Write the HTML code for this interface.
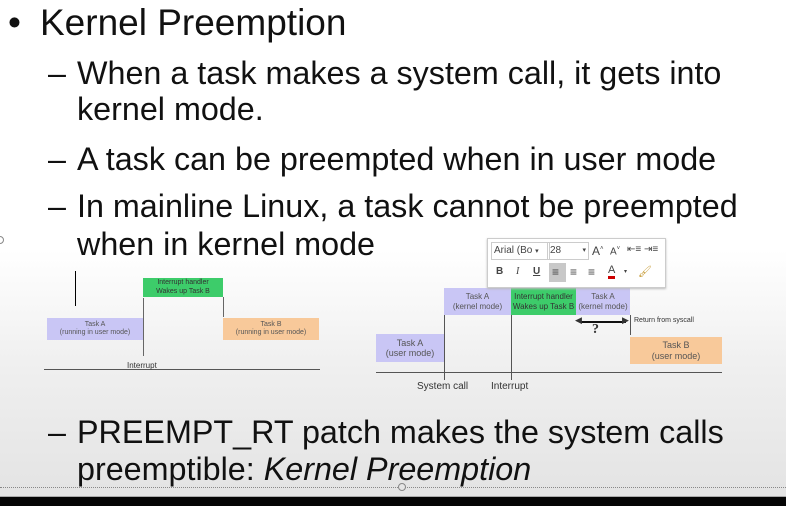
<!DOCTYPE html>
<html><head><meta charset="utf-8"><style>
body{margin:0;width:786px;height:506px;overflow:hidden;position:relative;font-family:"Liberation Sans",Arial,sans-serif;
background:linear-gradient(#ffffff 0px,#ffffff 250px,#f0f0f0 360px,#e4e4e4 490px);}
.t{position:absolute;white-space:nowrap;color:#111;line-height:1;}
.h{font-size:37px}
.s{font-size:32.3px}
.b{position:absolute;font-size:7px;text-align:center;color:#555;line-height:1.15;display:flex;align-items:center;justify-content:center;flex-direction:column}
.sm{position:absolute;font-size:10px;color:#333;white-space:nowrap}
</style></head><body>
<div class="t h" style="left:8px;top:4px">•</div>
<div class="t h" style="left:40px;top:4px">Kernel Preemption</div>
<div class="t s" style="left:48px;top:57px">–</div>
<div class="t s" style="left:77px;top:57px">When a task makes a system call, it gets into</div>
<div class="t s" style="left:77px;top:93px">kernel mode.</div>
<div class="t s" style="left:48px;top:143px">–</div>
<div class="t s" style="left:77px;top:143px">A task can be preempted when in user mode</div>
<div class="t s" style="left:48px;top:190px">–</div>
<div class="t s" style="left:77px;top:190px">In mainline Linux, a task cannot be preempted</div>
<div class="t s" style="left:77px;top:228px">when in kernel mode</div>
<div class="t s" style="left:48px;top:416px">–</div>
<div class="t s" style="left:77px;top:416px">PREEMPT_RT patch makes the system calls</div>
<div class="t s" style="left:77px;top:453px">preemptible: <i>Kernel Preemption</i></div>

<!-- left diagram -->
<div style="position:absolute;left:75px;top:271px;width:1px;height:35px;background:#000"></div>
<div class="b" style="left:47px;top:318px;width:96px;height:22px;background:#c9c6f5">Task A<span>(running in user mode)</span></div>
<div class="b" style="left:143px;top:278px;width:80px;height:19px;background:#3dcc6a;color:#333">Interrupt handler<span>Wakes up Task B</span></div>
<div class="b" style="left:223px;top:318px;width:96px;height:22px;background:#f8c99a">Task B<span>(running in user mode)</span></div>
<div style="position:absolute;left:143px;top:298px;width:1px;height:58px;background:#666"></div>
<div style="position:absolute;left:223px;top:297px;width:1px;height:20px;background:#666"></div>
<div style="position:absolute;left:44px;top:369px;width:276px;height:1px;background:#555"></div>
<div class="sm" style="left:127px;top:361px;font-size:8px">Interrupt</div>

<!-- right diagram -->
<div class="b" style="left:444px;top:288px;width:67px;height:27px;background:#c9c6f5;font-size:8px">Task A<span>(kernel mode)</span></div>
<div class="b" style="left:511px;top:288px;width:65px;height:27px;background:#3dcc6a;color:#333;font-size:8px">Interrupt handler<span>Wakes up Task B</span></div>
<div class="b" style="left:576px;top:288px;width:54px;height:27px;background:#c9c6f5;font-size:8px">Task A<span>(kernel mode)</span></div>
<div class="b" style="left:376px;top:334px;width:68px;height:28px;background:#c9c6f5;font-size:9px">Task A<span>(user mode)</span></div>
<div class="b" style="left:630px;top:337px;width:92px;height:27px;background:#f8c99a;font-size:9px">Task B<span>(user mode)</span></div>
<div style="position:absolute;left:376px;top:372px;width:346px;height:1px;background:#555"></div>
<div style="position:absolute;left:444px;top:315px;width:1px;height:65px;background:#555"></div>
<div style="position:absolute;left:511px;top:315px;width:1px;height:65px;background:#555"></div>
<div style="position:absolute;left:630px;top:315px;width:1px;height:20px;background:#555"></div>
<div style="position:absolute;left:580px;top:321px;width:46px;height:2px;background:#111"></div>
<div class="sm" style="left:575px;top:315px;font-size:9px">◀</div>
<div class="sm" style="left:622px;top:315px;font-size:9px">▶</div>
<div class="sm" style="left:592px;top:322px;font-size:14px;font-weight:bold;font-family:'Liberation Serif',serif">?</div>
<div class="sm" style="left:634px;top:317px;font-size:7px">Return from syscall</div>
<div class="sm" style="left:417px;top:381px">System call</div>
<div class="sm" style="left:491px;top:381px">Interrupt</div>

<!-- toolbar -->
<div style="position:absolute;left:487px;top:238px;width:177px;height:48px;background:#fff;border:1px solid #ccc;box-shadow:0 1px 2px #bbb;font-size:10px;color:#444">
 <div style="position:absolute;left:3px;top:3px;width:55px;height:16px;border:1px solid #ccc;line-height:16px;padding-left:2px">Arial (Bo <span style="font-size:7px">▾</span></div>
 <div style="position:absolute;left:59px;top:3px;width:38px;height:16px;border:1px solid #ccc;line-height:16px;padding-left:2px">28 <span style="font-size:7px;float:right;margin-right:2px">▾</span></div>
 <div style="position:absolute;left:104px;top:5px;font-size:12px">A<sup style="font-size:6px">˄</sup></div>
 <div style="position:absolute;left:122px;top:7px;font-size:10px">A<sup style="font-size:6px">˅</sup></div>
 <div style="position:absolute;left:139px;top:5px;font-size:10px">⇤≡</div>
 <div style="position:absolute;left:156px;top:5px;font-size:10px">⇥≡</div>
 <div style="position:absolute;left:8px;top:27px;font-weight:bold">B</div>
 <div style="position:absolute;left:28px;top:27px;font-style:italic;font-family:'Liberation Serif',serif">I</div>
 <div style="position:absolute;left:45px;top:27px;text-decoration:underline;font-weight:bold">U</div>
 <div style="position:absolute;left:61px;top:24px;width:17px;height:19px;background:#c8c8c8"></div>
 <div style="position:absolute;left:64px;top:26px;font-size:12px">≡</div>
 <div style="position:absolute;left:82px;top:26px;font-size:12px">≡</div>
 <div style="position:absolute;left:100px;top:26px;font-size:12px">≡</div>
 <div style="position:absolute;left:120px;top:26px;font-size:11px;border-bottom:3px solid #c00;line-height:11px">A</div>
 <div style="position:absolute;left:136px;top:29px;font-size:6px">▾</div>
 <div style="position:absolute;left:150px;top:26px;font-size:11px;color:#c9a040">🖌</div>
</div>

<!-- bottom -->
<div style="position:absolute;left:0;top:487px;width:786px;border-top:1px dotted #888"></div>
<div style="position:absolute;left:398px;top:483px;width:6px;height:6px;border:1px solid #888;border-radius:50%;background:#e6e6e6"></div>
<div style="position:absolute;left:-4px;top:236px;width:6px;height:6px;border:1px solid #888;border-radius:50%"></div>
<div style="position:absolute;left:0;top:496px;width:786px;height:1px;background:#aaa"></div>
<div style="position:absolute;left:0;top:497px;width:786px;height:9px;background:#050505"></div>
</body></html>
